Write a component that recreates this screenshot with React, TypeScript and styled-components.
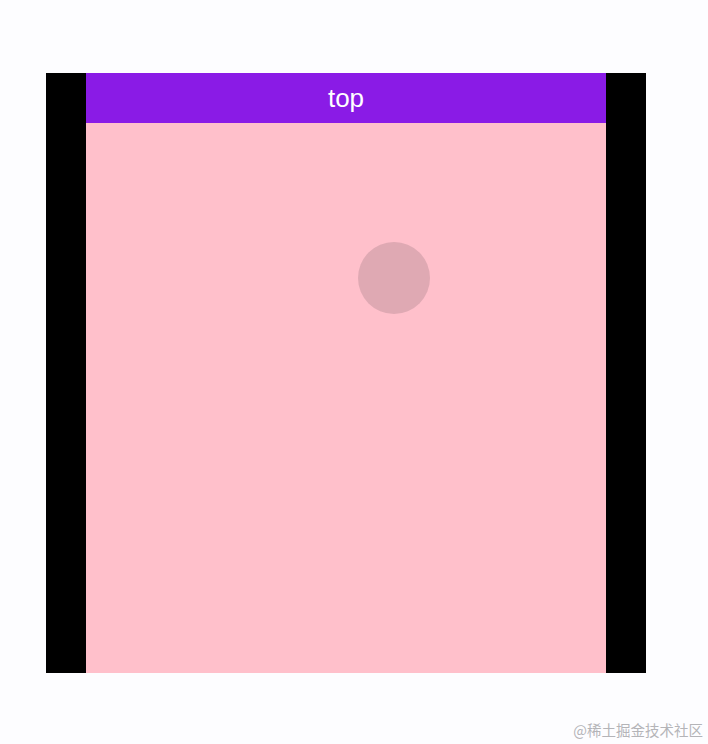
import styled, { createGlobalStyle } from "styled-components";

const GlobalStyle = createGlobalStyle`
  html, body {
    margin: 0;
    padding: 0;
    background: #fdfdff;
    font-family: "Liberation Sans", "Noto Sans CJK SC", sans-serif;
  }
`;

const Page = styled.div`
  position: relative;
  width: 708px;
  height: 744px;
  padding: 73px 0 0 46px;
  box-sizing: border-box;
`;

const Frame = styled.div`
  width: 600px;
  height: 600px;
  background: #000;
  padding: 0 40px;
  box-sizing: border-box;
  display: flex;
`;

const Screen = styled.div`
  position: relative;
  flex: 1;
  display: flex;
  flex-direction: column;
  background: #ffc0cb;
`;

const TopBar = styled.div`
  height: 50px;
  background: #8a1be6;
  color: #fff;
  font-size: 26px;
  display: flex;
  align-items: center;
  justify-content: center;
`;

const Dot = styled.div<{ $x: number; $y: number; $size: number }>`
  position: absolute;
  left: ${(p) => p.$x}px;
  top: ${(p) => p.$y}px;
  width: ${(p) => p.$size}px;
  height: ${(p) => p.$size}px;
  border-radius: 50%;
  background: rgba(110, 85, 95, 0.22);
`;

const Watermark = styled.div`
  position: absolute;
  right: 5px;
  bottom: 4px;
  font-size: 14.5px;
  color: #b4b4b8;
  font-family: "Noto Sans CJK SC", sans-serif;
`;

export default function App() {
  return (
    <>
      <GlobalStyle />
      <Page>
        <Frame>
          <Screen>
            <TopBar>top</TopBar>
            <Dot $x={272} $y={169} $size={72} />
          </Screen>
        </Frame>
        <Watermark>@稀土掘金技术社区</Watermark>
      </Page>
    </>
  );
}
